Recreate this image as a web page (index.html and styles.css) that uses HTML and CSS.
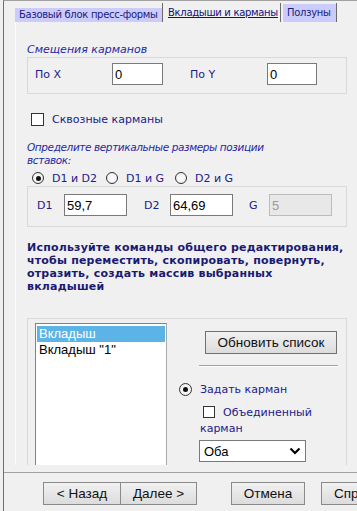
FILE: index.html
```html
<!DOCTYPE html>
<html lang="ru">
<head>
  <meta charset="UTF-8">
  <title>Вкладыши и карманы</title>
  <link rel="stylesheet" href="styles.css">
</head>
<body>

  <div class="window">
    <!-- Tabs -->
    <div class="tabs">
      <div class="tab tab-base">Базовый блок пресс-формы</div>
      <div class="tab tab-active">Вкладыши и карманы</div>
      <div class="tab tab-slide">Ползуны</div>
    </div>

    <div class="page">
      <!-- Pocket offsets -->
      <div class="group-title">Смещения карманов</div>
      <div class="group offsets">
        <span class="lbl lbl-x">По X</span>
        <input type="text" class="field field-x" value="0">
        <span class="lbl lbl-y">По Y</span>
        <input type="text" class="field field-y" value="0">
      </div>

      <div class="check-row">
        <span class="checkbox"></span>
        <span class="check-text">Сквозные карманы</span>
      </div>

      <!-- Vertical sizes -->
      <div class="hint">Определите вертикальные размеры позиции<br>вставок:</div>
      <div class="radio-row">
        <div class="option opt-1"><span class="radio checked"></span>D1 и D2</div>
        <div class="option opt-2"><span class="radio"></span>D1 и G</div>
        <div class="option"><span class="radio"></span>D2 и G</div>
      </div>
      <div class="group sizes">
        <span class="lbl lbl-d1">D1</span>
        <input type="text" class="field field-size" value="59,7">
        <span class="lbl lbl-d2">D2</span>
        <input type="text" class="field field-size" value="64,69">
        <span class="lbl lbl-g">G</span>
        <input type="text" class="field field-size" value="5" disabled>
      </div>

      <p class="note">Используйте команды общего редактирования,<br>чтобы переместить, скопировать, повернуть,<br>отразить, создать массив выбранных<br>вкладышей</p>

      <!-- Inserts list -->
      <div class="group inserts">
        <div class="listbox">
          <div class="item selected">Вкладыш</div>
          <div class="item">Вкладыш "1"</div>
        </div>
        <div class="side">
          <button type="button" class="btn btn-refresh">Обновить список</button>
          <div class="separator"></div>
          <div class="side-radio"><span class="radio checked"></span>Задать карман</div>
          <div class="side-check"><span class="checkbox small"></span>Объединенный карман</div>
          <div class="dropdown">
            <span>Оба</span>
            <svg width="12" height="8" viewBox="0 0 12 8"><path d="M1.5 1.5 L6 6 L10.5 1.5" fill="none" stroke="#000" stroke-width="2.2"/></svg>
          </div>
          <div class="next-box"></div>
        </div>
      </div>
    </div>

    <!-- Wizard buttons -->
    <div class="footer">
      <button type="button" class="btn btn-back">&lt; Назад</button>
      <button type="button" class="btn btn-next">Далее &gt;</button>
      <button type="button" class="btn btn-cancel">Отмена</button>
      <button type="button" class="btn btn-help">Справка</button>
    </div>
  </div>

</body>
</html>
```

FILE: styles.css
```css
body {
  margin: 0;
  background-color: #f0f0f0;
  font-family: "DejaVu Sans", sans-serif;
  font-size: 11px;
  color: #20208a;
}

.window {
  width: 354px;
  height: 511px;
  margin-left: 3px;
  border-left: 1px solid #6e6e6e;
  border-top: 1px solid #a0a0a0;
  box-sizing: border-box;
  overflow: hidden;
}

/* tabs */
.tabs {
  display: flex;
  align-items: flex-end;
  height: 21px;
  padding-left: 11px;
}

.tab {
  flex: none;
  box-sizing: border-box;
  font-size: 10px;
  letter-spacing: -0.3px;
  color: #1a1a80;
  white-space: nowrap;
  overflow: hidden;
}

.tab-base {
  width: 147px;
  height: 14px;
  padding-left: 4px;
  line-height: 14px;
  background-color: #ccccfc;
}

.tab-active {
  width: 119px;
  height: 19px;
  padding: 3px 0 0 5px;
  line-height: 13px;
  border-left: 1px solid #6a6a6a;
  border-right: 1px solid #6a6a6a;
  text-decoration: underline;
  color: #10107a;
}

.tab-slide {
  width: 54px;
  height: 19px;
  margin-left: 2px;
  padding: 2px 0 0 4px;
  line-height: 16px;
  background: linear-gradient(#f0f0f0 0, #f0f0f0 1px, #ccccfc 1px);
  border-right: 1px solid #6a6a6a;
}

/* tab page */
.page {
  height: 443px;
  margin-left: 11px;
  padding: 21px 0 0 11px;
  border-left: 1px solid #fbfbfb;
  box-sizing: border-box;
  overflow: hidden;
}

.group-title, .hint {
  font-style: italic;
  color: #2626a2;
  line-height: 14px;
}

.group {
  width: 320px;
  border: 1px solid #d9d9d9;
  box-sizing: border-box;
}

.lbl {
  flex: none;
}

.field {
  flex: none;
  box-sizing: border-box;
  height: 22px;
  margin: 0;
  padding: 0 2px;
  border: 1px solid #7a7a7a;
  background-color: #fff;
  font-family: "Liberation Sans", sans-serif;
  font-size: 13px;
  color: #000;
  outline: none;
}

.field:disabled {
  background-color: #e8e8e8;
  border-color: #bcbcbc;
  color: #9b9b9b;
}

.offsets {
  display: flex;
  align-items: center;
  padding: 5px 0 8px 7px;
}

.lbl-x { width: 77px; }
.field-x { width: 51px; }
.lbl-y { width: 77px; margin-left: 27px; }
.field-y { width: 50px; }

.check-row {
  display: flex;
  align-items: center;
  height: 16px;
  margin-top: 17px;
  padding-left: 4px;
}

.checkbox {
  flex: none;
  display: inline-block;
  width: 13px;
  height: 13px;
  border: 1px solid #333;
  background-color: #fff;
  box-sizing: border-box;
}

.checkbox.small {
  width: 12px;
  height: 12px;
  margin: 0 8px 0 3px;
  vertical-align: -2px;
}

.check-text {
  margin-left: 8px;
}

.hint {
  margin-top: 14px;
  font-size: 10.5px;
  letter-spacing: -0.4px;
  line-height: 13px;
}

.radio-row {
  display: flex;
  align-items: center;
  height: 16px;
  margin-top: 3px;
  padding-left: 5px;
}

.option {
  display: flex;
  align-items: center;
}

.opt-1 { width: 74px; }
.opt-2 { width: 69px; }

.radio {
  flex: none;
  position: relative;
  width: 12px;
  height: 12px;
  margin-right: 8px;
  border: 1px solid #333;
  border-radius: 50%;
  background: radial-gradient(#ffffff, #e9e9e9);
  box-sizing: border-box;
}

.radio.checked::after {
  content: "";
  position: absolute;
  left: 2.5px;
  top: 2.5px;
  width: 5px;
  height: 5px;
  border-radius: 50%;
  background-color: #111;
}

.sizes {
  display: flex;
  align-items: center;
  padding: 7px 0 10px 9px;
}

.field-size { width: 63px; }
.lbl-d1 { width: 27px; }
.lbl-d2 { width: 26px; margin-left: 17px; }
.lbl-g { width: 20px; margin-left: 16px; }

.note {
  margin: 14px 0 0;
  font-weight: bold;
  letter-spacing: 0.2px;
  line-height: 13px;
  color: #1a1a72;
  white-space: nowrap;
}

/* inserts list */
.inserts {
  display: flex;
  height: 200px;
  margin-top: 25px;
  padding: 4px 0 0 7px;
}

.listbox {
  flex: none;
  width: 132px;
  height: 180px;
  padding: 2px 1px;
  border: 1px solid #828282;
  border-right-color: #a8a8a8;
  background-color: #fff;
  box-sizing: border-box;
  font-family: "Liberation Sans", sans-serif;
  font-size: 13px;
  color: #000;
}

.item {
  height: 16px;
  line-height: 16px;
  padding-left: 2px;
}

.item.selected {
  background-color: #5cb4e6;
  color: #fff;
}

.side {
  display: flex;
  flex-direction: column;
  align-items: flex-start;
  margin-left: 12px;
}

.btn {
  flex: none;
  box-sizing: border-box;
  height: 23px;
  margin: 0;
  padding: 0;
  border: 1px solid #8a8a8a;
  background: linear-gradient(#f1f1f1, #dcdcdc);
  font-family: "Liberation Sans", sans-serif;
  font-size: 13.5px;
  color: #111;
  white-space: nowrap;
  overflow: hidden;
}

.btn-refresh {
  width: 132px;
  margin: 8px 0 0 26px;
  border-color: #707070;
}

.separator {
  width: 139px;
  margin: 11px 0 0 20px;
  border-top: 1px solid #a0a0a0;
  border-bottom: 1px solid #fff;
}

.side-radio {
  display: flex;
  align-items: center;
  height: 16px;
  margin-top: 14px;
}

.side-radio .radio {
  width: 13px;
  height: 13px;
}

.side-radio .radio.checked::after {
  left: 3px;
  top: 3px;
}

.side-check {
  width: 120px;
  margin-top: 8px;
  padding-left: 21px;
  line-height: 16px;
}

.dropdown {
  display: flex;
  align-items: center;
  justify-content: space-between;
  width: 107px;
  height: 22px;
  margin: 3px 0 0 20px;
  padding: 0 4px 0 4px;
  border: 1px solid #7a7a7a;
  background-color: #fff;
  box-sizing: border-box;
  font-family: "Liberation Sans", sans-serif;
  font-size: 13px;
  color: #000;
}

.next-box {
  width: 132px;
  height: 23px;
  margin: 4px 0 0 26px;
  border: 1px solid #7a7a7a;
  box-sizing: border-box;
}

/* wizard buttons */
.footer {
  display: flex;
  margin-top: 7px;
  padding: 9px 0 0 39px;
  border-top: 1px solid #a0a0a0;
}

.btn-back { width: 78px; }
.btn-next { width: 77px; margin-left: -1px; }
.btn-cancel { width: 74px; margin-left: 34px; }
.btn-help { width: 74px; margin-left: 16px; padding-left: 12px; text-align: left; }
```
